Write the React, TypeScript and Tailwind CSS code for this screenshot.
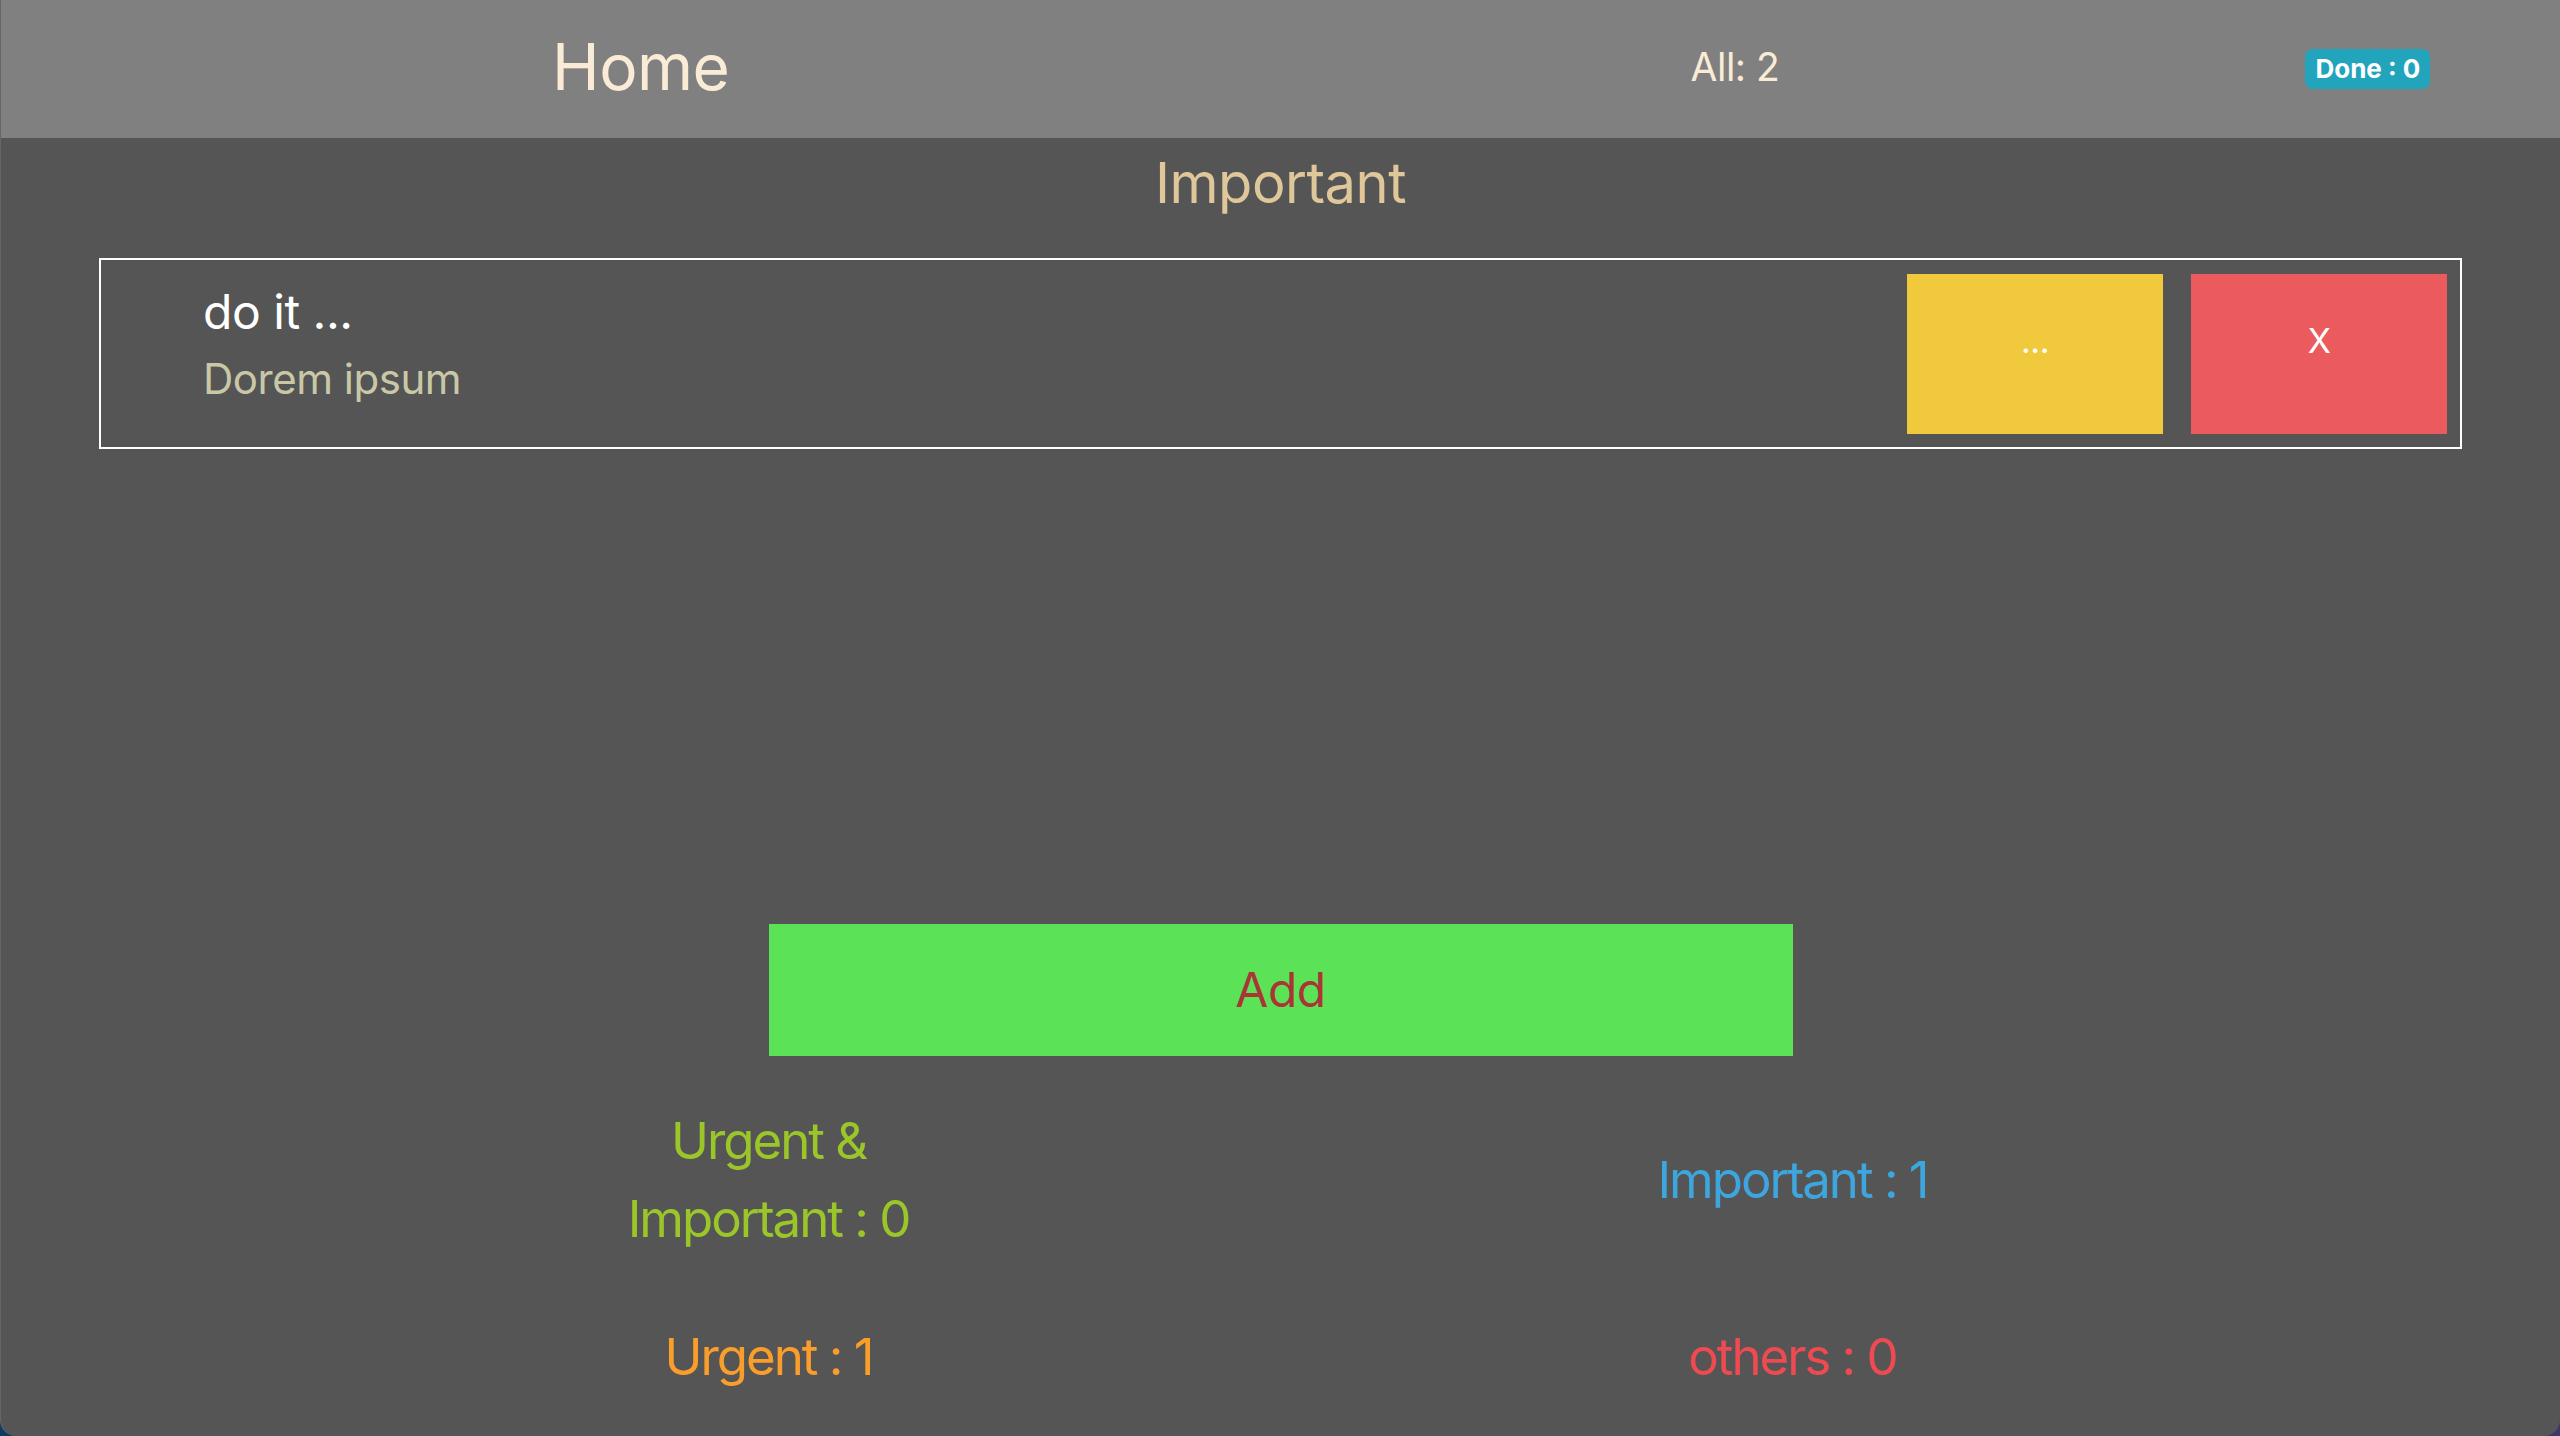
const font = { fontFamily: "Inter, 'Noto Sans', sans-serif" };

type Stat = { label: React.ReactNode; color: string };

const stats: Stat[] = [
  { label: <>Urgent &amp;<br />Important : 0</>, color: "text-[#9bc62a]" },
  { label: "Important : 1", color: "text-[#3ea6de]" },
  { label: "Urgent : 1", color: "text-[#f99d2b]" },
  { label: "others : 0", color: "text-[#ee4a52]" },
];

export default function App() {
  return (
    <div className="h-[1436px] w-full bg-gradient-to-r from-[#0e3b60] to-[#3f3569]" style={font}>
      <div className="flex h-full flex-col overflow-hidden rounded-b-[16px] border-l border-white/10 bg-[#555555] tracking-[-0.03em]">
        {/* nav */}
        <header className="flex h-[138px] shrink-0 items-center bg-[#808080] pb-[5px]">
          <div className="w-1/2 text-center text-[64px] leading-none text-[#faebd7]">Home</div>
          <div className="ml-[410px] text-[39px] leading-none text-[#faebd7]">All: 2</div>
          <span className="ml-[526px] mt-[4px] rounded-[8px] bg-[#22a4bc] px-[10px] py-[7px] text-[26px] font-bold leading-none tracking-normal text-white">
            Done : 0
          </span>
        </header>

        <h2 className="mt-[17px] text-center text-[56px] leading-none text-[#dfc79a]">Important</h2>

        {/* task list */}
        <div className="mx-[98px] mt-[47px] flex h-[191px] items-start border-2 border-white">
          <div className="flex-1 pl-[102px] pt-[28px]">
            <div className="text-[48px] leading-none text-white">do it ...</div>
            <div className="mt-[22px] text-[42px] leading-none text-[#c9c8a6]">Dorem ipsum</div>
          </div>
          <div className="mr-[13px] flex gap-[28px] self-center">
            <button className="flex h-[160px] w-[256px] justify-center bg-[#f0c93d] pt-[50px] text-[34px] leading-none text-white">
              ...
            </button>
            <button className="flex h-[160px] w-[256px] justify-center bg-[#eb5b5e] pt-[50px] text-[34px] leading-none text-white">
              X
            </button>
          </div>
        </div>

        <button className="mx-auto mt-[475px] h-[132px] w-[1024px] bg-[#5ce257] text-[48px] leading-none text-[#aa3535]">
          Add
        </button>

        {/* counters */}
        <div className="mx-auto mt-[46px] grid w-[2048px] grid-cols-2 items-center gap-y-[60px]">
          {stats.map((s, i) => (
            <div key={i} className={`text-center text-[51px] leading-[78px] tracking-[-0.04em] ${s.color}`}>
              {s.label}
            </div>
          ))}
        </div>
      </div>
    </div>
  );
}
